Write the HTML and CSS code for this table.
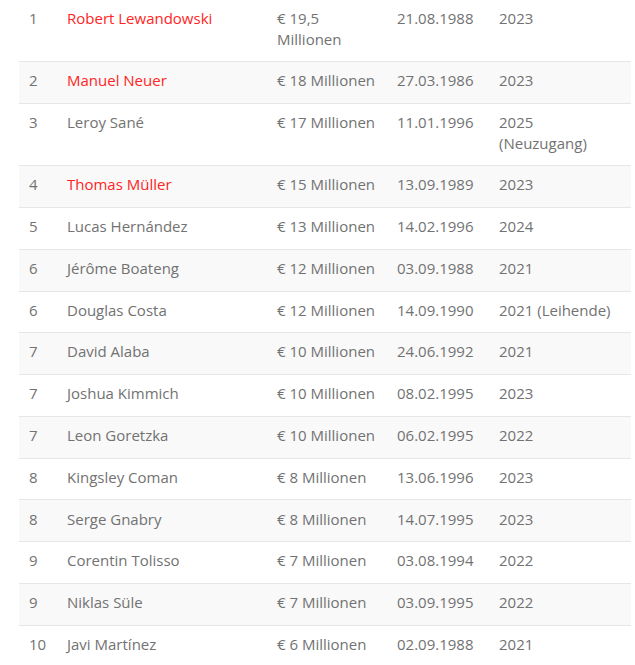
FILE: index.html
```html
<!DOCTYPE html>
<html lang="de">
<head>
<meta charset="utf-8">
<title>Gehälter</title>
<link rel="stylesheet" href="styles.css">
</head>
<body>
<table class="salary">
  <colgroup>
    <col class="c-rank"><col class="c-name"><col class="c-value"><col class="c-date"><col class="c-year">
  </colgroup>
  <tbody>
    <tr><td>1</td><td class="hl">Robert Lewandowski</td><td>€ 19,5 Millionen</td><td>21.08.1988</td><td>2023</td></tr>
    <tr><td>2</td><td class="hl">Manuel Neuer</td><td>€ 18 Millionen</td><td>27.03.1986</td><td>2023</td></tr>
    <tr><td>3</td><td>Leroy Sané</td><td>€ 17 Millionen</td><td>11.01.1996</td><td>2025 (Neuzugang)</td></tr>
    <tr><td>4</td><td class="hl">Thomas Müller</td><td>€ 15 Millionen</td><td>13.09.1989</td><td>2023</td></tr>
    <tr><td>5</td><td>Lucas Hernández</td><td>€ 13 Millionen</td><td>14.02.1996</td><td>2024</td></tr>
    <tr><td>6</td><td>Jérôme Boateng</td><td>€ 12 Millionen</td><td>03.09.1988</td><td>2021</td></tr>
    <tr><td>6</td><td>Douglas Costa</td><td>€ 12 Millionen</td><td>14.09.1990</td><td>2021 (Leihende)</td></tr>
    <tr><td>7</td><td>David Alaba</td><td>€ 10 Millionen</td><td>24.06.1992</td><td>2021</td></tr>
    <tr><td>7</td><td>Joshua Kimmich</td><td>€ 10 Millionen</td><td>08.02.1995</td><td>2023</td></tr>
    <tr><td>7</td><td>Leon Goretzka</td><td>€ 10 Millionen</td><td>06.02.1995</td><td>2022</td></tr>
    <tr><td>8</td><td>Kingsley Coman</td><td>€ 8 Millionen</td><td>13.06.1996</td><td>2023</td></tr>
    <tr><td>8</td><td>Serge Gnabry</td><td>€ 8 Millionen</td><td>14.07.1995</td><td>2023</td></tr>
    <tr><td>9</td><td>Corentin Tolisso</td><td>€ 7 Millionen</td><td>03.08.1994</td><td>2022</td></tr>
    <tr><td>9</td><td>Niklas Süle</td><td>€ 7 Millionen</td><td>03.09.1995</td><td>2022</td></tr>
    <tr><td>10</td><td>Javi Martínez</td><td>€ 6 Millionen</td><td>02.09.1988</td><td>2021</td></tr>
  </tbody>
</table>
</body>
</html>
```

FILE: styles.css
```css
html, body {
  margin: 0;
  padding: 0;
  background: #ffffff;
}
body {
  font-family: "Open Sans", "DejaVu Sans", sans-serif;
  font-size: 15px;
  color: #727272;
}
.salary {
  margin: -1px 0 0 19px;
  width: 612px;
  border-collapse: collapse;
  table-layout: fixed;
}
.c-rank { width: 38px; }
.c-name { width: 210px; }
.c-value { width: 120px; }
.c-date { width: 102px; }
.c-year { width: 142px; }
.salary td {
  padding: 8.2px 10px 12.2px;
  line-height: 20.4px;
  vertical-align: top;
  text-align: left;
  border-top: 1px solid #e6e6e6;
  white-space: normal;
}
.salary tr:nth-child(even) td {
  background: #f9f9f9;
}
.salary td.hl {
  color: #ff2424;
}
```
